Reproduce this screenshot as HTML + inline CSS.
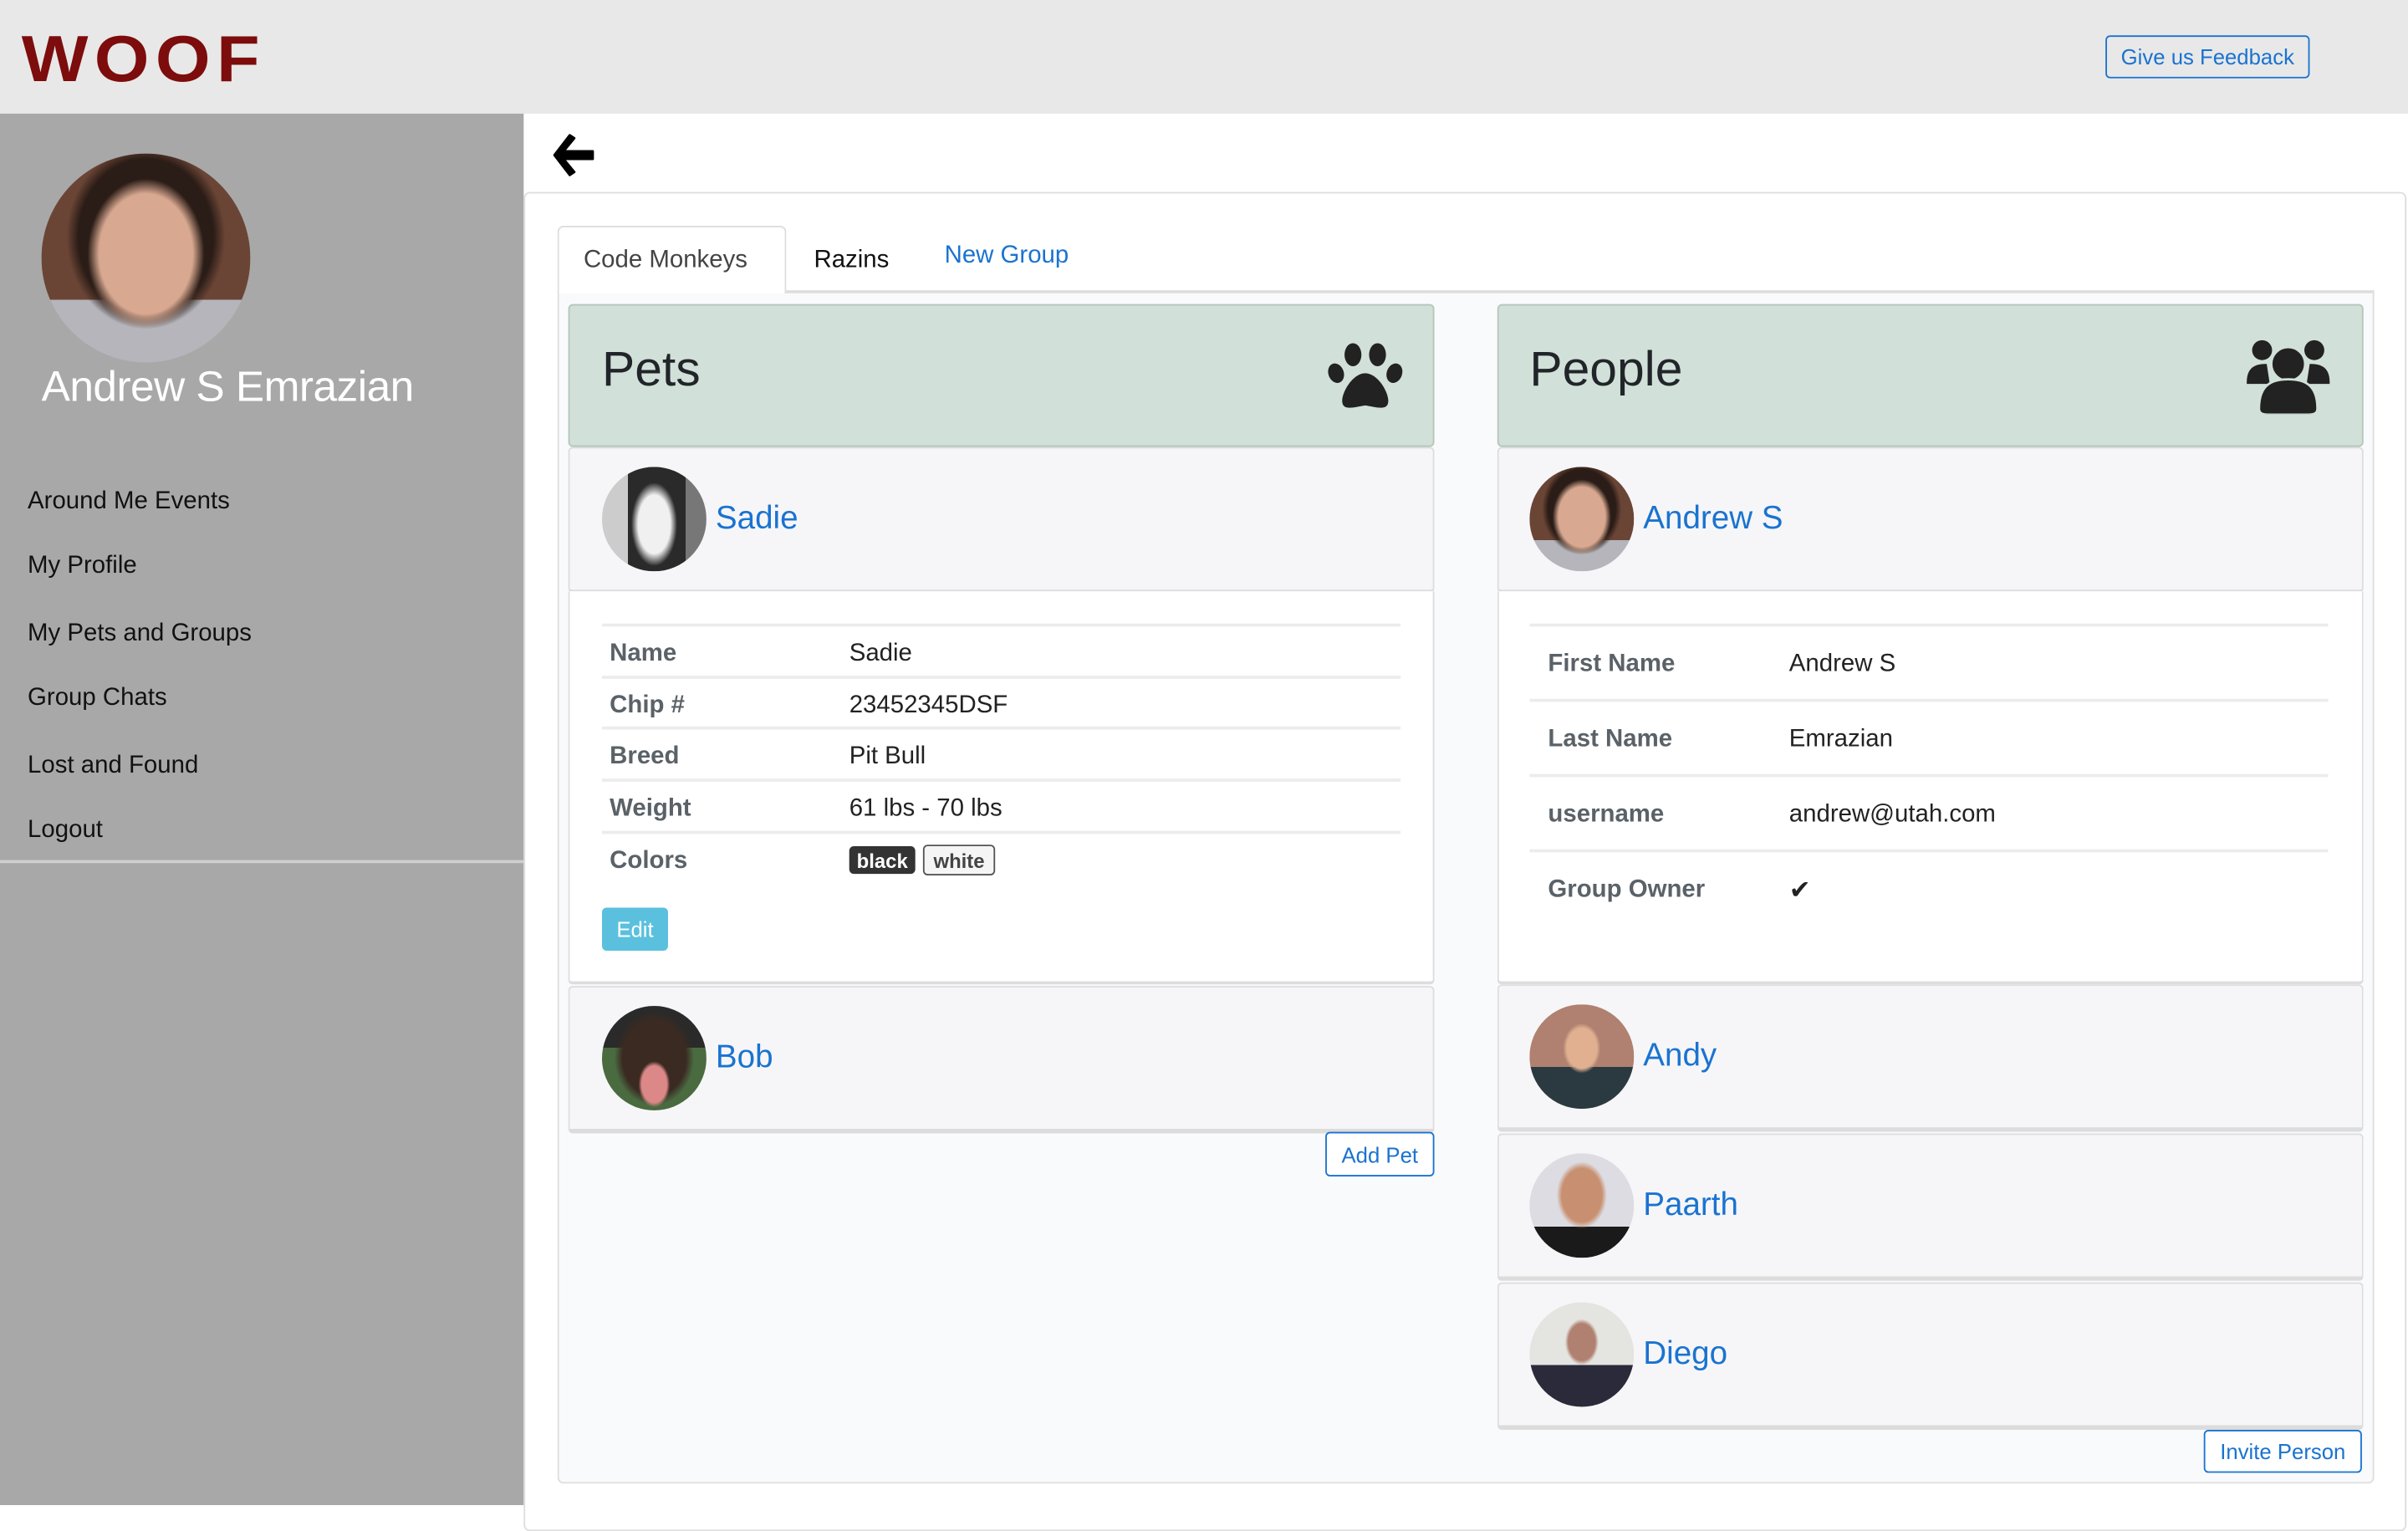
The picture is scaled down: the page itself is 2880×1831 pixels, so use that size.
<!DOCTYPE html>
<html><head><meta charset="utf-8">
<style>
html,body{margin:0;padding:0;width:2880px;height:1800px;overflow:hidden;background:#fff}
#w{position:absolute;left:0;top:0;width:1568px;height:980px;transform:scale(1.836735);transform-origin:0 0;font-family:"Liberation Sans",sans-serif;color:#212529}
.a{position:absolute}
.hdr{left:0;top:0;width:1568px;height:74px;background:#e8e8e8}
.logo{left:14px;top:11px;font-size:46px;color:#7d0c0c;letter-spacing:4px;font-weight:bold;transform:scaleY(0.92)}
.fb{left:1371px;top:23px;width:131px;height:26px;border:1px solid #1a73d0;border-radius:3px;color:#1a73d0;font-size:14px;line-height:27px;text-align:center}
.side{left:0;top:74px;width:341px;height:906px;background:#a8a8a8}
.menu{left:18px;font-size:16px;color:#111;margin-top:2px}
.av{border-radius:50%;overflow:hidden}
.blue{color:#1a73d0}
.box{border:1px solid #dcdcdc;border-radius:4px}
.ph{background:#d1e0d8;border:1px solid #b5c6bc;border-radius:3px}
.item{background:#f6f6f8;border:1px solid #ddd;border-bottom:3px solid #dcdcdc;border-radius:3px}
.lbl{font-size:16px;font-weight:bold;color:#5a6268;margin-top:2px}
.val{font-size:16px;color:#222;margin-top:2px}
.hl{height:2px;background:#ececec}
.nm{font-size:21px;color:#1a73d0;margin-top:2px}
</style></head><body><div id="w">
<div class="a hdr"></div>
<div class="a logo">WOOF</div>
<div class="a fb">Give us Feedback</div>

<div class="a side"></div>
<div class="a av" style="left:27px;top:100px;width:136px;height:136px;background:radial-gradient(ellipse 28% 36% at 50% 48%,#d8a890 0 80%,transparent 100%),radial-gradient(ellipse 38% 44% at 50% 40%,#2a1c16 0 85%,transparent 100%),linear-gradient(#6a4536 0 70%,#b5b5bb 70%)"></div>
<div class="a" style="left:27px;top:236px;font-size:28px;color:#fff;letter-spacing:-0.3px">Andrew S Emrazian</div>
<div class="a menu" style="top:316px">Around Me Events</div>
<div class="a menu" style="top:358px">My Profile</div>
<div class="a menu" style="top:402px">My Pets and Groups</div>
<div class="a menu" style="top:444px">Group Chats</div>
<div class="a menu" style="top:488px">Lost and Found</div>
<div class="a menu" style="top:530px">Logout</div>
<div class="a" style="left:0;top:560px;width:341px;height:2px;background:#cfcfcf"></div>

<svg class="a" style="left:358px;top:86px" width="30" height="30" viewBox="0 0 30 30"><path d="M13 2 L3 15 L13 28 L16 26 L9 17.5 L28 17.5 L28 12.5 L9 12.5 L16 4 Z" fill="#000" stroke="#000" stroke-width="1.5" stroke-linejoin="round"/></svg>

<div class="a box" style="left:341px;top:125px;width:1224px;height:870px;border-color:#ddd"></div>
<div class="a" style="left:363px;top:189px;width:1183px;height:2px;background:#ddd"></div>
<div class="a" style="left:363px;top:147px;width:147px;height:44px;border:1px solid #ddd;border-bottom:none;border-radius:4px 4px 0 0;background:#fff"></div>
<div class="a" style="left:380px;top:161px;font-size:16px;color:#444">Code Monkeys</div>
<div class="a" style="left:530px;top:161px;font-size:16px;color:#111">Razins</div>
<div class="a blue" style="left:615px;top:158px;font-size:16px">New Group</div>
<div class="a" style="left:363px;top:191px;width:1181px;height:774px;border:1px solid #ddd;border-top:none;border-radius:0 0 4px 4px;background:#f9fafb"></div>

<!-- Pets -->
<div class="a ph" style="left:370px;top:198px;width:562px;height:91px"></div>
<div class="a" style="left:392px;top:222px;font-size:32px;color:#212529">Pets</div>
<svg class="a" style="left:864px;top:222px" width="50" height="46" viewBox="0 0 50 46"><ellipse cx="17" cy="9" rx="5.5" ry="7.5" fill="#222"/><ellipse cx="33" cy="9" rx="5.5" ry="7.5" fill="#222"/><ellipse cx="6" cy="21" rx="5" ry="6.5" transform="rotate(-20 6 21)" fill="#222"/><ellipse cx="44" cy="21" rx="5" ry="6.5" transform="rotate(20 44 21)" fill="#222"/><path d="M25 21 C17 21 10 33 10 39 C10 46 18 43 25 42 C32 43 40 46 40 39 C40 33 33 21 25 21Z" fill="#222"/></svg>

<div class="a item" style="left:370px;top:291px;width:562px;height:92px;border-bottom:2px solid #ddd"></div>
<div class="a av" style="left:392px;top:304px;width:68px;height:68px;background:radial-gradient(ellipse 22% 40% at 50% 55%,#f0f0f0 0 70%,transparent 100%),linear-gradient(90deg,#ccc 0 25%,#2a2a2a 25% 80%,#777 80%)"></div>
<div class="a nm" style="left:466px;top:324px">Sadie</div>
<div class="a" style="left:370px;top:385px;width:562px;height:254px;background:#fff;border:1px solid #ddd;border-top:none;border-bottom:2px solid #ddd;border-radius:0 0 3px 3px"></div>
<div class="a hl" style="left:392px;top:406px;width:520px"></div>
<div class="a hl" style="left:392px;top:440px;width:520px"></div>
<div class="a hl" style="left:392px;top:473px;width:520px"></div>
<div class="a hl" style="left:392px;top:507px;width:520px"></div>
<div class="a hl" style="left:392px;top:541px;width:520px"></div>
<div class="a lbl" style="left:397px;top:415px">Name</div><div class="a val" style="left:553px;top:415px">Sadie</div>
<div class="a lbl" style="left:397px;top:449px">Chip #</div><div class="a val" style="left:553px;top:449px">23452345DSF</div>
<div class="a lbl" style="left:397px;top:482px">Breed</div><div class="a val" style="left:553px;top:482px">Pit Bull</div>
<div class="a lbl" style="left:397px;top:516px">Weight</div><div class="a val" style="left:553px;top:516px">61 lbs - 70 lbs</div>
<div class="a lbl" style="left:397px;top:550px">Colors</div>
<div class="a" style="left:553px;top:551px;width:43px;height:18px;background:#333;border-radius:3px;color:#fff;font-size:13px;font-weight:bold;text-align:center;line-height:19px">black</div>
<div class="a" style="left:601px;top:550px;width:45px;height:18px;background:#f5f5f5;border:1px solid #555;border-radius:3px;color:#444;font-size:13px;font-weight:bold;text-align:center;line-height:19px">white</div>
<div class="a" style="left:392px;top:591px;width:43px;height:28px;background:#5bc0de;border-radius:3px;color:#fff;font-size:14px;text-align:center;line-height:28px">Edit</div>

<div class="a item" style="left:370px;top:642px;width:562px;height:92px"></div>
<div class="a av" style="left:392px;top:655px;width:68px;height:68px;background:radial-gradient(ellipse 15% 22% at 50% 75%,#d88 0 80%,transparent 100%),radial-gradient(ellipse 38% 45% at 50% 50%,#3a2a22 0 80%,transparent 100%),linear-gradient(#2a2a2a 0 40%,#4a6a40 40%)"></div>
<div class="a nm" style="left:466px;top:675px">Bob</div>
<div class="a" style="left:863px;top:737px;width:69px;height:27px;border:1px solid #1a73d0;border-radius:3px;color:#1a73d0;font-size:14px;text-align:center;line-height:28px;background:#fff">Add Pet</div>

<!-- People -->
<div class="a ph" style="left:975px;top:198px;width:562px;height:91px"></div>
<div class="a" style="left:996px;top:222px;font-size:32px;color:#212529">People</div>
<svg class="a" style="left:1462px;top:218px" width="56" height="52" viewBox="0 0 56 52"><circle cx="11" cy="10" r="6.5" fill="#222"/><circle cx="45" cy="10" r="6.5" fill="#222"/><path d="M1 31 C1 20 8 19 14 19 L16 32 L1 32Z" fill="#222"/><path d="M55 31 C55 20 48 19 42 19 L40 32 L55 32Z" fill="#222"/><circle cx="28" cy="19" r="11" fill="#222" stroke="#d1e0d8" stroke-width="1.5"/><path d="M9 48 C9 32 18 29 28 29 C38 29 47 32 47 48 C47 51 45 52 41 52 L15 52 C11 52 9 51 9 48Z" fill="#222" stroke="#d1e0d8" stroke-width="1.5"/></svg>

<div class="a item" style="left:975px;top:291px;width:562px;height:92px;border-bottom:2px solid #ddd"></div>
<div class="a av" style="left:996px;top:304px;width:68px;height:68px;background:radial-gradient(ellipse 28% 36% at 50% 48%,#d8a890 0 80%,transparent 100%),radial-gradient(ellipse 38% 44% at 50% 40%,#2a1c16 0 85%,transparent 100%),linear-gradient(#6a4536 0 70%,#b5b5bb 70%)"></div>
<div class="a nm" style="left:1070px;top:324px">Andrew S</div>
<div class="a" style="left:975px;top:385px;width:562px;height:254px;background:#fff;border:1px solid #ddd;border-top:none;border-bottom:2px solid #ddd;border-radius:0 0 3px 3px"></div>
<div class="a hl" style="left:996px;top:406px;width:520px"></div>
<div class="a hl" style="left:996px;top:455px;width:520px"></div>
<div class="a hl" style="left:996px;top:504px;width:520px"></div>
<div class="a hl" style="left:996px;top:553px;width:520px"></div>
<div class="a lbl" style="left:1008px;top:422px">First Name</div><div class="a val" style="left:1165px;top:422px">Andrew S</div>
<div class="a lbl" style="left:1008px;top:471px">Last Name</div><div class="a val" style="left:1165px;top:471px">Emrazian</div>
<div class="a lbl" style="left:1008px;top:520px">username</div><div class="a val" style="left:1165px;top:520px">andrew@utah.com</div>
<div class="a lbl" style="left:1008px;top:569px">Group Owner</div><div class="a val" style="left:1165px;top:568px;font-size:17px">&#10004;</div>

<div class="a item" style="left:975px;top:641px;width:562px;height:92px"></div>
<div class="a av" style="left:996px;top:654px;width:68px;height:68px;background:radial-gradient(ellipse 18% 24% at 50% 42%,#e0b090 0 80%,transparent 100%),linear-gradient(#b08070 0 60%,#2a3a40 60%)"></div>
<div class="a nm" style="left:1070px;top:674px">Andy</div>
<div class="a item" style="left:975px;top:738px;width:562px;height:92px"></div>
<div class="a av" style="left:996px;top:751px;width:68px;height:68px;background:radial-gradient(ellipse 24% 32% at 50% 40%,#c89070 0 80%,transparent 100%),linear-gradient(#dcdce2 0 70%,#1a1a1a 70%)"></div>
<div class="a nm" style="left:1070px;top:771px">Paarth</div>
<div class="a item" style="left:975px;top:835px;width:562px;height:92px"></div>
<div class="a av" style="left:996px;top:848px;width:68px;height:68px;background:radial-gradient(ellipse 16% 22% at 50% 38%,#b08070 0 80%,transparent 100%),linear-gradient(#e4e4e0 0 60%,#2a2a3a 60%)"></div>
<div class="a nm" style="left:1070px;top:868px">Diego</div>
<div class="a" style="left:1435px;top:931px;width:101px;height:26px;border:1px solid #1a73d0;border-radius:3px;color:#1a73d0;font-size:14px;text-align:center;line-height:27px;background:#fff">Invite Person</div>
</div></body></html>
